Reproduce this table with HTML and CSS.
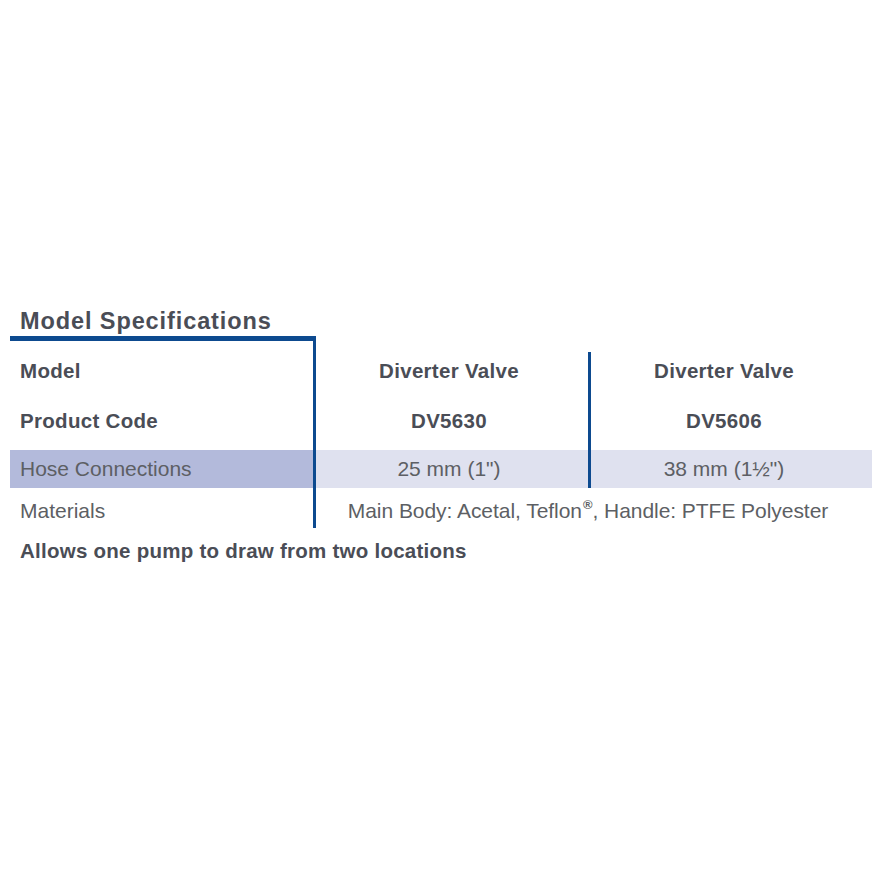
FILE: index.html
```html
<!DOCTYPE html>
<html lang="en">
<head>
<meta charset="utf-8">
<title>Model Specifications</title>
<link rel="stylesheet" href="styles.css">
</head>
<body>
<section class="spec">
  <h2 class="spec-title">Model Specifications</h2>
  <div class="spec-grid">
    <div class="cell label bold r1">Model</div>
    <div class="cell val bold r1 c2">Diverter Valve</div>
    <div class="cell val bold r1 c3">Diverter Valve</div>

    <div class="cell label bold r2">Product Code</div>
    <div class="cell val bold r2 c2">DV5630</div>
    <div class="cell val bold r2 c3">DV5606</div>

    <div class="cell label r4 shade-dark">Hose Connections</div>
    <div class="cell val r4 c2 shade-light">25 mm (1")</div>
    <div class="cell val r4 c3 shade-light">38 mm (1½")</div>

    <div class="cell label r5">Materials</div>
    <div class="cell val r5 span"><span>Main Body: Acetal, Teflon<sup class="reg">®</sup>, Handle: PTFE Polyester</span></div>

    <div class="frame"></div>
    <div class="divider"></div>
  </div>
  <p class="spec-note">Allows one pump to draw from two locations</p>
</section>
</body>
</html>
```

FILE: styles.css
```css
html, body {
  margin: 0;
  padding: 0;
  background: #ffffff;
}

body {
  font-family: "Liberation Sans", Arial, Helvetica, sans-serif;
  color: #55575c;
}

.spec {
  width: 862px;
  margin: 300px 0 0 10px;
}

.spec-title {
  margin: 0;
  padding-left: 10px;
  height: 36px;
  line-height: 42px;
  font-size: 23.5px;
  font-weight: bold;
  color: #4a4d56;
  letter-spacing: 0.9px;
}

.spec-grid {
  display: grid;
  grid-template-columns: 306px 272px 284px;
  grid-template-rows: 65px 40px 9px 38px 40px;
}

.cell {
  display: flex;
  align-items: center;
  font-size: 21px;
  white-space: nowrap;
}

.bold {
  font-weight: bold;
  color: #4a4d56;
  font-size: 20.5px;
  letter-spacing: 0.3px;
}

.label {
  grid-column: 1;
  padding-left: 10px;
}

.val {
  justify-content: center;
}

.c2 { grid-column: 2; padding-right: 6px; }
.c3 { grid-column: 3; padding-right: 12px; }
.span { grid-column: 2 / 4; padding-right: 12px; letter-spacing: -0.05px; }

.r1 { grid-row: 1; padding-top: 5px; }
.r2 { grid-row: 2; }
.r4 { grid-row: 4; }
.r5 { grid-row: 5; padding-top: 6px; }

.r4, .r5 {
  color: #5d5f64;
}

.shade-dark { background: #b3badb; }
.shade-light { background: #dfe1ef; }

.reg {
  font-size: 13px;
  font-weight: bold;
  line-height: 0;
  vertical-align: 9px;
  margin-left: 1px;
}

.frame {
  grid-column: 1;
  grid-row: 1 / 6;
  border-top: 5px solid #0d4a8f;
  border-right: 3px solid #0d4a8f;
}

.divider {
  grid-column: 3;
  grid-row: 1 / 5;
  justify-self: start;
  width: 3px;
  margin-top: 16px;
  background: #0d4a8f;
}

.spec-note {
  margin: 3px 0 0;
  padding-left: 10px;
  line-height: 40px;
  font-size: 20.5px;
  font-weight: bold;
  color: #4a4d56;
  letter-spacing: 0.25px;
}
```
